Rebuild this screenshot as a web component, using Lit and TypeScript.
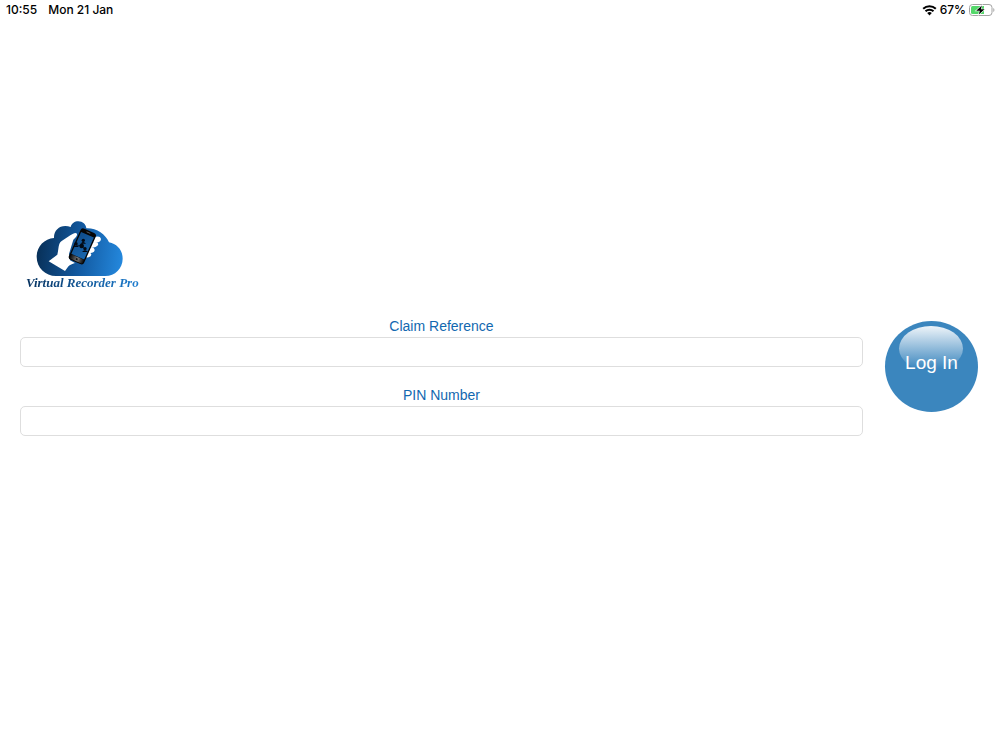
import { LitElement, html, css } from "lit";
import { customElement } from "lit/decorators.js";

@customElement("status-bar")
class StatusBar extends LitElement {
  static styles = css`
    :host {
      display: flex;
      justify-content: space-between;
      align-items: center;
      height: 20px;
      padding: 0 5px 0 6px;
      font: 500 12px/20px Inter, "Liberation Sans", sans-serif;
      color: #000;
    }
    .group {
      display: flex;
      align-items: center;
    }
    .left {
      gap: 11px;
    }
    .right {
      gap: 3px;
    }
    svg {
      display: block;
    }
  `;

  render() {
    return html`
      <div class="group left"><span>10:55</span><span>Mon 21 Jan</span></div>
      <div class="group right">
        <svg width="15" height="11" viewBox="0 0 15 11" role="img" aria-label="Wi-Fi">
          <g fill="none" stroke="#000" stroke-width="2">
            <path d="M1.200 3.700a9 9 0 0 1 12.600 0" />
            <path d="M3.500 6.300a5.700 5.700 0 0 1 8 0" />
          </g>
          <path d="M5.200 8.100a3.300 3.300 0 0 1 4.600 0L7.500 10.400z" />
        </svg>
        <span>67%</span>
        <svg width="26" height="12" viewBox="0 0 26 12" role="img" aria-label="Battery charging">
          <rect x="0.500" y="0.500" width="22.500" height="11" rx="3" fill="#fff" stroke="#a2a2a2" />
          <path d="M3.500 2H15v8H3.500A1.500 1.500 0 0 1 2 8.500v-5A1.500 1.500 0 0 1 3.500 2z" fill="#53d769" />
          <path d="M24.300 4v4c1.500-.6 1.500-3.400 0-4z" fill="#a2a2a2" />
          <path d="M12.800 1.600 7.200 6.700h3.600L9.800 10.400l5.800-5.100H12z" fill="#000" stroke="#fff" stroke-width="1.200" paint-order="stroke" />
        </svg>
      </div>
    `;
  }
}

@customElement("brand-logo")
class BrandLogo extends LitElement {
  static styles = css`
    :host {
      display: flex;
      flex-direction: column;
      align-items: flex-start;
      width: max-content;
    }
    svg {
      display: block;
      margin-left: 10px;
    }
    .name {
      font: italic bold 13px/16px "Liberation Serif", serif;
      color: transparent;
      background: linear-gradient(90deg, #07325f, #1d7dd0);
      background-clip: text;
      -webkit-background-clip: text;
      white-space: nowrap;
      margin-top: -2px;
    }
  `;

  render() {
    return html`
      <svg width="88" height="58" viewBox="48 25 264 174" aria-hidden="true">
        <defs>
          <linearGradient id="sky" gradientUnits="userSpaceOnUse" x1="50" y1="120" x2="308" y2="150">
            <stop offset="0" stop-color="#083058" />
            <stop offset="0.500" stop-color="#1259a0" />
            <stop offset="1" stop-color="#2488dd" />
          </linearGradient>
          <linearGradient id="screen" x1="0" y1="0" x2="1" y2="1">
            <stop offset="0" stop-color="#0f4c8a" />
            <stop offset="1" stop-color="#1a68b0" />
          </linearGradient>
          <linearGradient id="metal" x1="0" y1="0" x2="1" y2="0">
            <stop offset="0" stop-color="#050505" />
            <stop offset="0.550" stop-color="#777" />
            <stop offset="1" stop-color="#0a0a0a" />
          </linearGradient>
        </defs>
        <path
          fill="url(#sky)"
          d="M108 196C76 196 50 171 50 138C50 108 73 84 102 82C101 61 116 46 136 46C142 46 147 47 152 49C155 38 164 32 175 32C188 32 198 41 199 53C230 52 256 70 267 95C291 99 308 119 308 144C308 173 285 196 256 196Z"
        />
        <path
          fill="#fff"
          d="M86 152L112 132C117 112 114 99 125 91L151 74C160 67 169 64 171 70C172 77 165 82 160 87L147 130L150 149L165 157C153 161 147 163 141 173L135 181Z"
        />
        <g fill="#fff">
          <ellipse cx="229" cy="87" rx="14" ry="9" transform="rotate(-15 229 87)" />
          <ellipse cx="219" cy="103" rx="16" ry="8" transform="rotate(-12 219 103)" />
          <ellipse cx="211" cy="119" rx="13" ry="8" transform="rotate(-12 211 119)" />
          <ellipse cx="204" cy="133" rx="10" ry="7" transform="rotate(-15 204 133)" />
        </g>
        <g transform="translate(187 107) rotate(24)">
          <rect x="-25" y="-51" width="50" height="102" rx="9" fill="#050505" />
          <rect x="-22" y="35" width="44" height="13" rx="4" fill="url(#metal)" />
          <rect x="-21" y="-38" width="42" height="72" fill="url(#screen)" />
          <path d="M-6-45H6" stroke="#777" stroke-width="2" />
          <circle cx="0" cy="42" r="4" fill="#111" stroke="#999" />
        </g>
        <g fill="#020914">
          <path d="M185 106L189 91M185 106L169 103M185 106L195 117" stroke="#020914" stroke-width="2" />
          <circle cx="185" cy="106" r="7" />
          <circle cx="190" cy="89" r="5" />
          <path d="M181 99q9-10 17 0z" />
          <circle cx="168" cy="99" r="5" />
          <path d="M160 109q8-11 17 0z" />
          <circle cx="195" cy="114" r="5" />
          <path d="M186 124q9-11 18 0z" />
        </g>
      </svg>
      <span class="name">Virtual Recorder Pro</span>
    `;
  }
}

@customElement("app-root")
class AppRoot extends LitElement {
  static styles = css`
    :host {
      display: block;
      min-height: 100vh;
      background: #fff;
      font-family: "Liberation Sans", Arial, sans-serif;
    }
    .page {
      padding: 199px 22px 20px 20px;
    }
    brand-logo {
      margin-left: 6px;
    }
    .login {
      display: flex;
      align-items: flex-start;
      gap: 22px;
      margin-top: 26px;
    }
    .fields {
      flex: 1;
      display: flex;
      flex-direction: column;
      gap: 19px;
    }
    .field {
      display: flex;
      flex-direction: column;
    }
    label {
      padding-bottom: 2px;
      font-size: 14px;
      line-height: 18px;
      text-align: center;
      color: #1268b0;
    }
    input {
      box-sizing: border-box;
      width: 100%;
      height: 30px;
      padding: 0 8px;
      border: 1px solid #dedede;
      border-radius: 5px;
      background: #fff;
      font: inherit;
      font-size: 14px;
    }
    .submit {
      position: relative;
      width: 93px;
      height: 91px;
      margin-top: 4px;
      padding: 0 0 7px;
      border: 0;
      border-radius: 50%;
      background: #3b86be;
      color: #fff;
      font: 19px/22px "Liberation Sans", Arial, sans-serif;
      cursor: pointer;
    }
    .submit::before {
      content: "";
      position: absolute;
      top: 5px;
      left: 14px;
      right: 15px;
      height: 45px;
      border-radius: 50%;
      background: linear-gradient(#eef4f9, #3b86be 95%);
    }
    .caption {
      position: relative;
    }
  `;

  render() {
    return html`
      <status-bar></status-bar>
      <main class="page">
        <brand-logo></brand-logo>
        <form class="login" @submit=${(e: Event) => e.preventDefault()}>
          <div class="fields">
            <div class="field">
              <label for="claim">Claim Reference</label>
              <input id="claim" type="text" autocomplete="off" />
            </div>
            <div class="field">
              <label for="pin">PIN Number</label>
              <input id="pin" type="password" autocomplete="off" />
            </div>
          </div>
          <button class="submit" type="submit"><span class="caption">Log In</span></button>
        </form>
      </main>
    `;
  }
}
